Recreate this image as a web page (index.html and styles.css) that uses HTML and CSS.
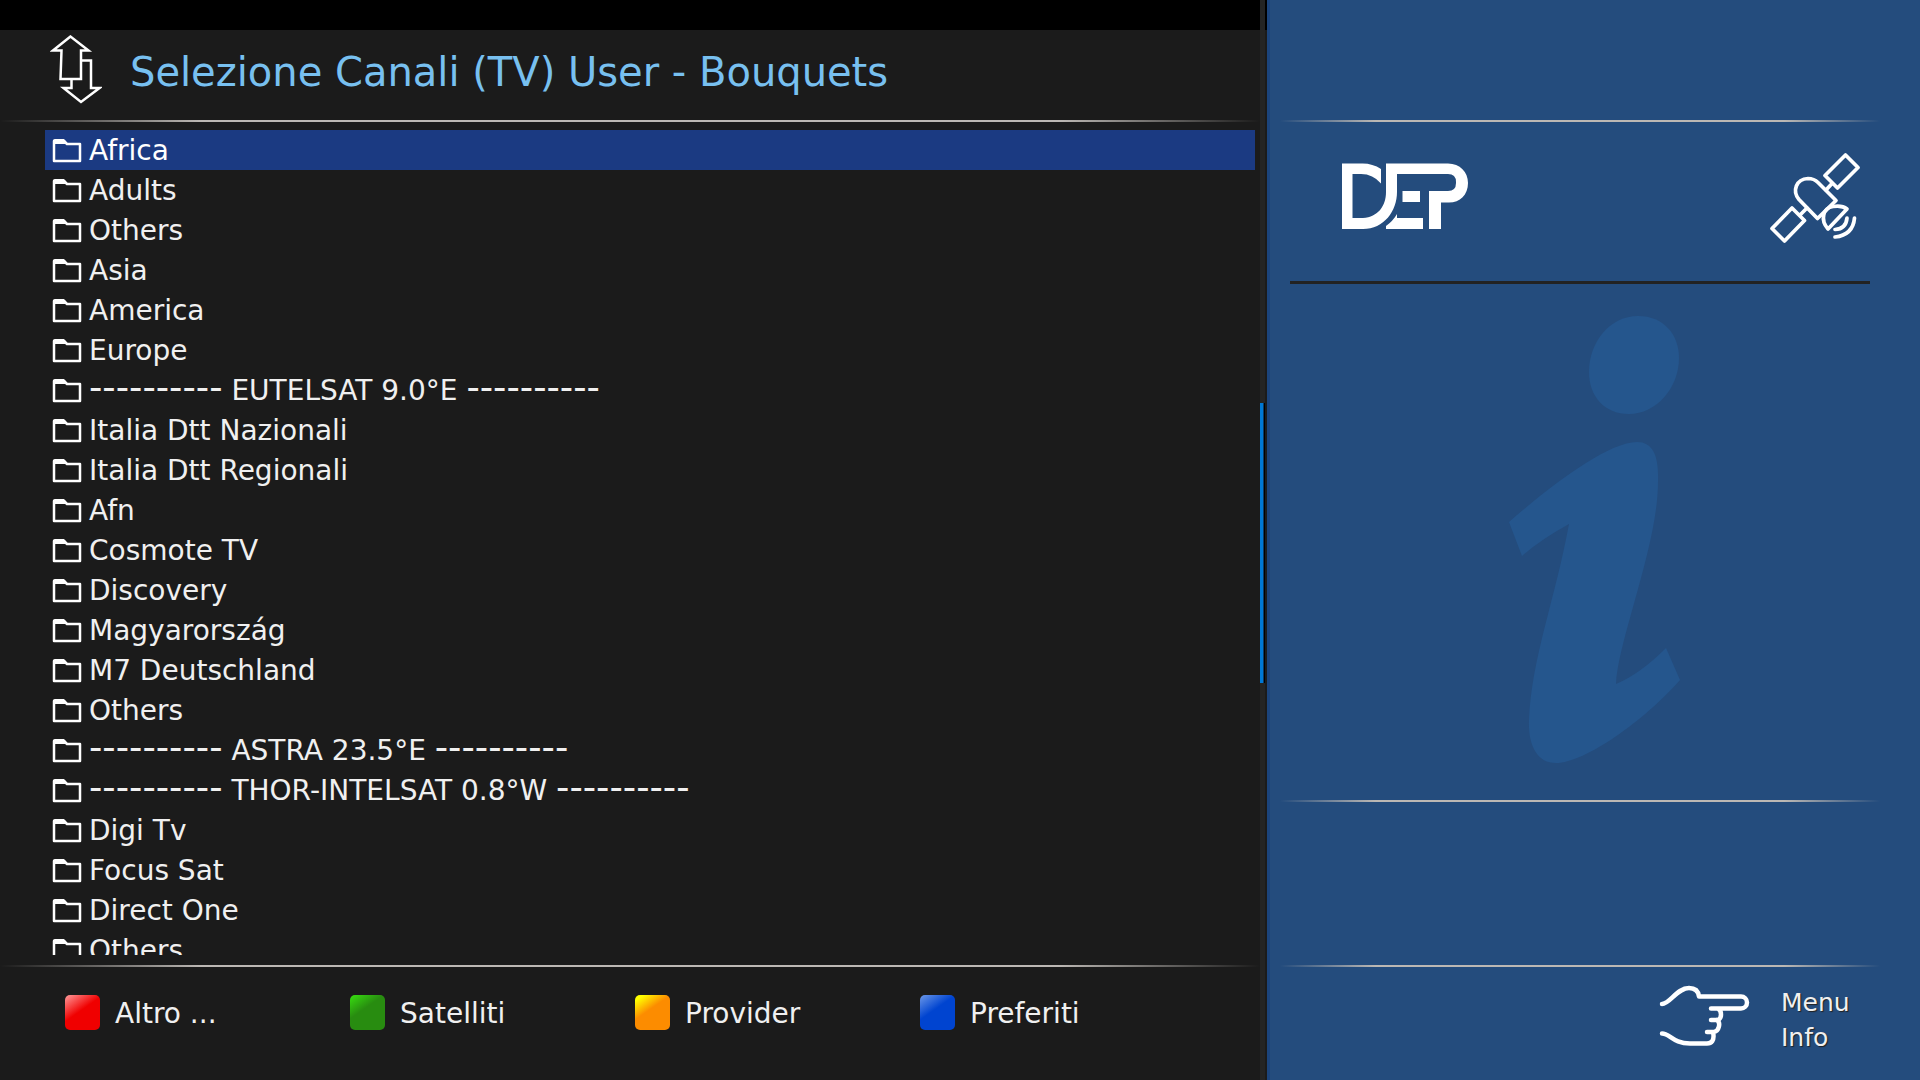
FILE: index.html
```html
<!DOCTYPE html>
<html lang="it">
<head>
<meta charset="utf-8">
<title>Selezione Canali</title>
<link rel="stylesheet" href="styles.css">
</head>
<body>
<svg class="defs" aria-hidden="true">
  <symbol id="folder" viewBox="0 0 30 26">
    <path d="M2 23V3H12L15 6H28V23Z" fill="none" stroke="#fff" stroke-width="2.500" stroke-linejoin="round"/>
    <path d="M1 6V3Q1 1 3 1H12L16 6Z" fill="#fff"/>
  </symbol>
</svg>
<div class="screen">
  <main class="channels">
    <div class="column">
      <div class="strip"></div>
      <header class="header">
        <svg class="sort" viewBox="50 34 52 70" fill="none" stroke="#fff" stroke-width="2.500" aria-hidden="true">
          <path d="M70.500 36.500L53 50.500H61.500L60.500 79H81L81 50.500H88.500Z"/>
          <path d="M81 60.500H91V88H99.500L81 102L63.500 88H71.500V79"/>
        </svg>
        <h1>Selezione Canali (TV) User - Bouquets</h1>
      </header>
      <div class="rule"></div>
      <ul class="list">
        <li><a class="row selected" href="#"><svg><use href="#folder"/></svg>Africa</a></li>
        <li><a class="row" href="#"><svg><use href="#folder"/></svg>Adults</a></li>
        <li><a class="row" href="#"><svg><use href="#folder"/></svg>Others</a></li>
        <li><a class="row" href="#"><svg><use href="#folder"/></svg>Asia</a></li>
        <li><a class="row" href="#"><svg><use href="#folder"/></svg>America</a></li>
        <li><a class="row" href="#"><svg><use href="#folder"/></svg>Europe</a></li>
        <li><a class="row" href="#"><svg><use href="#folder"/></svg><span><span class="dashes">----------</span> EUTELSAT 9.0°E <span class="dashes">----------</span></span></a></li>
        <li><a class="row" href="#"><svg><use href="#folder"/></svg>Italia Dtt Nazionali</a></li>
        <li><a class="row" href="#"><svg><use href="#folder"/></svg>Italia Dtt Regionali</a></li>
        <li><a class="row" href="#"><svg><use href="#folder"/></svg>Afn</a></li>
        <li><a class="row" href="#"><svg><use href="#folder"/></svg>Cosmote TV</a></li>
        <li><a class="row" href="#"><svg><use href="#folder"/></svg>Discovery</a></li>
        <li><a class="row" href="#"><svg><use href="#folder"/></svg>Magyarország</a></li>
        <li><a class="row" href="#"><svg><use href="#folder"/></svg>M7 Deutschland</a></li>
        <li><a class="row" href="#"><svg><use href="#folder"/></svg>Others</a></li>
        <li><a class="row" href="#"><svg><use href="#folder"/></svg><span><span class="dashes">----------</span> ASTRA 23.5°E <span class="dashes">----------</span></span></a></li>
        <li><a class="row" href="#"><svg><use href="#folder"/></svg><span><span class="dashes">----------</span> THOR-INTELSAT 0.8°W <span class="dashes">----------</span></span></a></li>
        <li><a class="row" href="#"><svg><use href="#folder"/></svg>Digi Tv</a></li>
        <li><a class="row" href="#"><svg><use href="#folder"/></svg>Focus Sat</a></li>
        <li><a class="row" href="#"><svg><use href="#folder"/></svg>Direct One</a></li>
        <li><a class="row" href="#"><svg><use href="#folder"/></svg>Others</a></li>
      </ul>
      <div class="rule"></div>
      <footer class="keys">
        <button class="key" type="button"><span class="cap red"></span>Altro ...</button>
        <button class="key" type="button"><span class="cap green"></span>Satelliti</button>
        <button class="key" type="button"><span class="cap yellow"></span>Provider</button>
        <button class="key" type="button"><span class="cap blue"></span>Preferiti</button>
      </footer>
    </div>
    <div class="track"><div class="thumb"></div></div>
  </main>
  <aside class="side">
    <div class="side-top"></div>
    <div class="rule"></div>
    <div class="brand">
      <svg class="logo" viewBox="142 163 126 66" fill="#fff" role="img" aria-label="DEP">
        <path d="M142 163.500H161Q172 163 181 169V183.500Q173 174 161 174H152.500V218H163C178 217 186 206 186 192V163.500H248C260 163.500 268 172 268 183C268 195 260 202.500 249 202.500H241V229H229V191H248Q256 191 256 183V182Q256 174 248 174H197V192C197 211 184 229 163 229H142Z"/>
        <path d="M202.500 191H220V202H202.500ZM186 229V226Q193 221 197 214V218H223V229Z"/>
      </svg>
      <svg class="satellite" viewBox="50 23 90 90" fill="none" stroke="#fff" stroke-width="3.700" stroke-linecap="round" stroke-linejoin="round" aria-hidden="true">
        <path d="M125.500 25L138 37.500L117.500 58L105 45.500ZM72 78L84.500 90.500L64.500 111L52 98.500ZM106 60L112 53.500M80 85L87 78"/>
        <path d="M98 52.500L116 70.500L97.500 88.500L79 69.500C72 61 76 49 88 48.500Q94 48.500 98 52.500Z"/>
        <path d="M127 79L108 99C100 90 103 78 113 76.500Q122 75 127 79ZM127 88Q126 99 115 99.500M134.500 88Q133 105 115 107"/>
      </svg>
    </div>
    <div class="divider"></div>
    <div class="details">
      <svg class="info" viewBox="28 24 173 450" fill="#25568d" aria-hidden="true">
        <path d="M158 26C184 26 199 45 199 68C199 98 176 124 149 124C124 124 109 106 109 82C109 52 130 26 158 26Z"/>
        <path d="M29 232C70 196 128 152 157 152C174 152 179 168 178 192C178 255 138 350 136 394Q160 384 186 358L200 390C165 430 105 473 76 473C57 473 48 455 49 430C51 370 75 310 89 234Q60 250 42 266Z"/>
      </svg>
    </div>
    <div class="rule"></div>
    <div class="event"></div>
    <div class="rule"></div>
    <footer class="hints">
      <svg class="hand" viewBox="39 44 91 62" fill="none" stroke="#fff" stroke-width="4.500" stroke-linecap="round" stroke-linejoin="round" aria-hidden="true">
        <path d="M42 63C50 63 57 47 69 47Q78 47 79 55.500H121A6 6 0 0 1 121 67.500H91M98 67.500C102 70 102 77 98 79H91M97 79C101 82 99 90 94 91H87M93 91C95 100 91 102.500 87 102.500H70C53 102.500 50 92.500 42 92.500"/>
      </svg>
      <nav class="hint-links">
        <a href="#">Menu</a>
        <a href="#">Info</a>
      </nav>
    </footer>
  </aside>
</div>
</body>
</html>
```
FILE: styles.css
```css
* { box-sizing: border-box; }

body {
  margin: 0;
  background: #1b1b1b;
  color: #f0f0f0;
  font-family: "DejaVu Sans", Verdana, sans-serif;
  font-size: 28px;
}

a { color: inherit; text-decoration: none; }

.defs { display: none; }

.screen {
  display: grid;
  grid-template-columns: 66fr 34fr;
  height: 100vh;
}

.channels {
  display: flex;
  min-width: 0;
  min-height: 0;
  padding-right: 2px;
  background: linear-gradient(#000 30px, #1b1b1b 30px);
}

.column {
  display: flex;
  flex: 1;
  flex-direction: column;
  min-width: 0;
}

.strip { height: 30px; }

.header {
  display: flex;
  align-items: flex-start;
  gap: 28px;
  height: 90px;
  padding: 4px 50px 0;
}

.sort { width: 52px; height: 70px; }

h1 {
  margin: 0;
  color: #78c0f0;
  font-size: 40px;
  font-weight: 400;
  line-height: 76px;
  white-space: nowrap;
}

.rule {
  flex: none;
  height: 2px;
  background: linear-gradient(90deg, transparent, #bcb8b4 16%, #bcb8b4 84%, transparent);
}

.list {
  flex: 1;
  min-height: 0;
  margin: 8px 5px 10px 45px;
  padding: 0;
  overflow: hidden;
  list-style: none;
}

.row {
  display: flex;
  align-items: center;
  gap: 7px;
  height: 40px;
  padding: 2px 0 0 7px;
  line-height: 40px;
  white-space: pre;
}

.row svg { width: 30px; height: 26px; }

.selected { background: #1b3a82; color: #fff; }

.dashes {
  font-size: 37px;
  line-height: 1px;
}

.keys {
  display: grid;
  grid-template-columns: repeat(4, 285px);
  align-items: start;
  height: 113px;
  padding: 28px 0 0 65px;
}

.key {
  display: flex;
  align-items: flex-end;
  gap: 15px;
  padding: 0;
  border: 0;
  background: none;
  color: inherit;
  font: inherit;
  line-height: 32px;
}

.cap {
  width: 35px;
  height: 35px;
  border-radius: 5px;
}

.red { background: linear-gradient(145deg, #ff9c9c, #f00000 45%); }
.green { background: linear-gradient(145deg, #38e010, #288c10 40%); }
.yellow { background: linear-gradient(145deg, #ffff00 10%, #fc8c00 42%); }
.blue { background: linear-gradient(145deg, #6c98e8, #0044d0 42%); }

.track {
  display: grid;
  grid-template-rows: 403fr 280fr 397fr;
  width: 5px;
  background: #242424;
}

.thumb {
  grid-row: 2;
  border-right: 1px solid #000;
  background: linear-gradient(90deg, #0078d4 3px, #0a3c68 3px);
}

.side {
  display: flex;
  flex-direction: column;
  min-width: 0;
  border-left: 3px solid #1b447c;
  background: #244c7d;
}

.side .rule { margin: 0 40px 0 10px; }

.side-top { height: 120px; }

.brand {
  display: flex;
  align-items: flex-start;
  justify-content: space-between;
  height: 159px;
  padding: 31px 60px 0 72px;
}

.logo { width: 126px; height: 66px; margin-top: 10px; }

.satellite { width: 90px; height: 90px; }

.divider {
  height: 3px;
  margin: 0 50px 0 20px;
  background: #222;
}

.details {
  display: flex;
  flex: 1;
  align-items: center;
  justify-content: center;
  min-height: 0;
  padding: 0 2px 6px 0;
}

.info { width: 173px; height: 450px; }

.event { height: 163px; }

.hints {
  display: flex;
  justify-content: flex-end;
  gap: 31px;
  height: 113px;
  padding: 18px 70px 0 0;
}

.hand { width: 91px; height: 62px; }

.hint-links {
  display: flex;
  flex-direction: column;
  width: 69px;
  font-size: 25px;
  line-height: 35px;
  text-shadow: 1px 1px 1px #222;
}
```
